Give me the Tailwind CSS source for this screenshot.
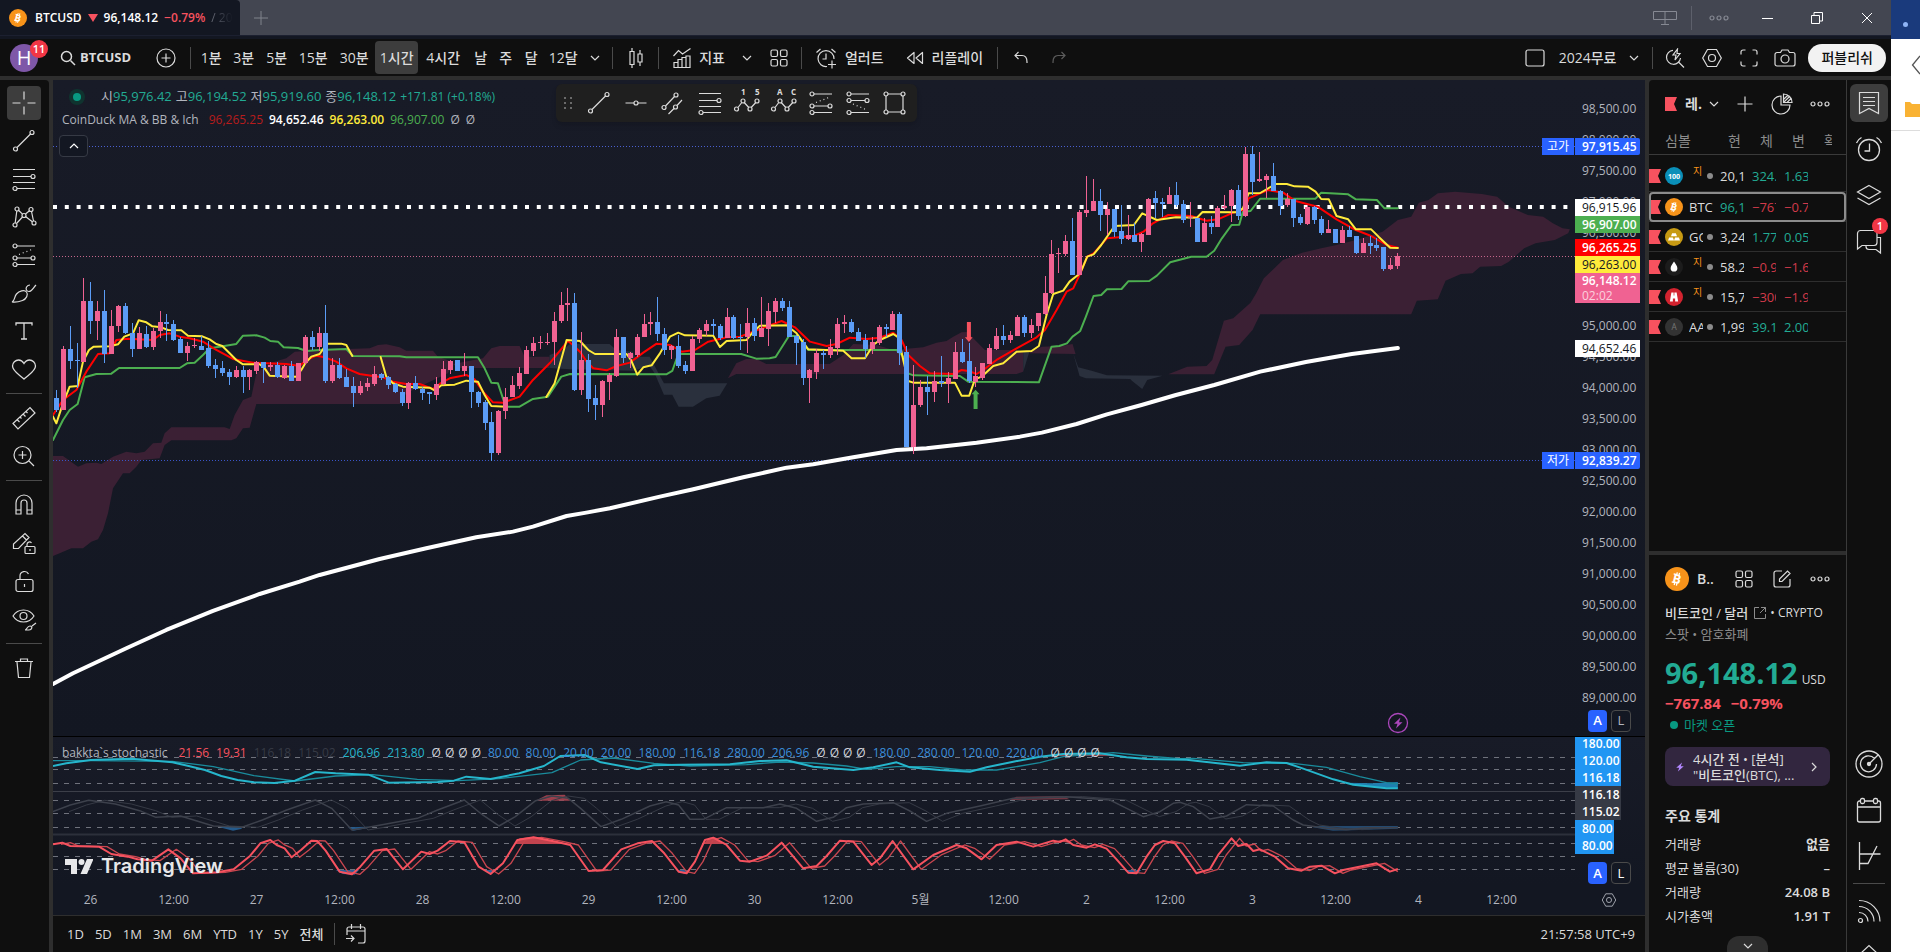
<!DOCTYPE html>
<html lang="ko">
<head>
  <meta charset="UTF-8">
  <meta name="viewport" content="width=device-width, initial-scale=1.0">
  <title>BTCUSD 96,148.12 −0.79%</title>
  <script src="https://cdn.jsdelivr.net/npm/@tailwindcss/browser@4"></script>
</head>
<body class="flex h-screen overflow-hidden bg-[#2e2e2e] font-['Open_Sans','Noto_Sans_CJK_KR',sans-serif] text-[13px] leading-4 text-[#dbdbdb]">

<!-- Shared icons -->
<svg class="hidden">
  <symbol id="i-chevron" viewBox="0 0 12 12"><path d="M2 4l4 4 4-4" fill="none" stroke="currentColor" stroke-width="1.2"/></symbol>
  <symbol id="i-dots" viewBox="0 0 20 8"><g fill="none" stroke="currentColor" stroke-width="1.2"><circle cx="3" cy="4" r="2"/><circle cx="10" cy="4" r="2"/><circle cx="17" cy="4" r="2"/></g></symbol>
  <symbol id="i-grid" viewBox="0 0 18 18"><g fill="none" stroke="currentColor" stroke-width="1.2"><rect x="1" y="1" width="6.5" height="6.5" rx="1.5"/><rect x="10.500" y="1" width="6.500" height="6.500" rx="1.500"/><rect x="1" y="10.500" width="6.500" height="6.500" rx="1.500"/><rect x="10.500" y="10.500" width="6.500" height="6.500" rx="1.500"/></g></symbol>
  <symbol id="i-hex" viewBox="0 0 22 22"><g fill="none" stroke="currentColor" stroke-width="1.2"><path d="M6.500 2.500h9l4.800 8.500-4.800 8.500h-9L1.700 11z"/><circle cx="11" cy="11" r="3.500"/></g></symbol>
  <symbol id="i-trend" viewBox="0 0 28 28"><g fill="none" stroke="currentColor" stroke-width="1.200"><circle cx="5.500" cy="22" r="2"/><circle cx="22" cy="5.500" r="2"/><path d="M7 20.500L20.500 7"/></g></symbol>
  <symbol id="i-fib" viewBox="0 0 28 28"><g fill="none" stroke="currentColor" stroke-width="1.200"><path d="M3 4.500h22M3 11.500h18M3 17.500h22M7 23.500h18"/><circle cx="23" cy="11.500" r="2"/><circle cx="5" cy="23.500" r="2"/></g></symbol>
  <symbol id="i-long" viewBox="0 0 28 28"><g fill="none" stroke="currentColor" stroke-width="1.200"><circle cx="5" cy="5" r="2"/><circle cx="5" cy="17" r="2"/><circle cx="23" cy="17" r="2"/><circle cx="5" cy="23.500" r="2"/><path d="M7 5h18M7 17h14M7 23.500h18"/><path d="M9 13.500L23 8" stroke-dasharray="1 3"/></g></symbol>
  <symbol id="i-btc" viewBox="0 0 24 24"><circle cx="12" cy="12" r="12" fill="#f7931a"/><g transform="rotate(14 12 12)"><text x="12" y="16.500" text-anchor="middle" font-size="12.500" font-weight="700" fill="#fff">B</text><path d="M10.700 5.500v3M13 5.500v3M10.700 15.500v3M13 15.500v3M7.500 7.800h3M7.500 16h3" stroke="#fff" stroke-width="1.300"/></g></symbol>
  <symbol id="i-bolt" viewBox="0 0 12 12"><path d="M8.500 0.500L1.500 6.800h3.600L3.500 11.500l7-6.300H6.900z" fill="currentColor"/></symbol>
  <symbol id="i-flag" viewBox="0 0 12 14"><path d="M0 0h12L9 7l3 7H0z" fill="#f7525f"/></symbol>
</svg>

<div class="flex min-w-0 flex-1 flex-col">

  <!-- Window title bar -->
  <div class="flex h-9 shrink-0 items-center border-b border-[#1c2030] bg-[#434651]">
    <div class="flex h-full w-60 items-center gap-1.5 overflow-hidden rounded-tr bg-[#131722] pl-[9px] whitespace-nowrap text-white">
      <svg class="mr-0.5 size-[18px] shrink-0"><use href="#i-btc"/></svg>
      <span class="text-xs font-semibold">BTCUSD</span>
      <svg class="size-2.5 shrink-0" viewBox="0 0 10 10"><path d="M0 1h10L5 9z" fill="#f7525f"/></svg>
      <span class="text-xs font-semibold">96,148.12</span>
      <span class="text-xs font-semibold text-[#f7525f]">−0.79%</span>
      <span class="bg-linear-to-r from-[#6a6e79] to-[#131722] bg-clip-text text-xs text-transparent">/ 20</span>
    </div>
    <button aria-label="새 탭" class="ml-3.5 text-[#80838c]"><svg class="size-3.5" viewBox="0 0 14 14"><path d="M7 0v14M0 7h14" stroke="currentColor"/></svg></button>
    <div class="ml-auto flex items-center">
      <svg class="h-4 w-6 text-[#868993]" viewBox="0 0 24 16" fill="none" stroke="currentColor"><path d="M.5 1.500h23v8H.5zM12 1.500v13M8 14.500h8"/></svg>
      <span class="mx-3.5 h-6 w-px bg-[#5d606b]"></span>
      <button aria-label="더보기" class="mr-[33px] ml-[3px] text-[#868993]"><svg class="h-2 w-5"><use href="#i-dots"/></svg></button>
      <button aria-label="최소화" class="w-[49px] text-white"><svg class="size-3" viewBox="0 0 12 12"><path d="M0 6.500h11" stroke="currentColor"/></svg></button>
      <button aria-label="창 복원" class="w-[50px] text-white"><svg class="size-3" viewBox="0 0 12 12" fill="none" stroke="currentColor"><path d="M.5 3.500h8v8h-8zM3 3V.5h8.500V9H9"/></svg></button>
      <button aria-label="닫기" class="mr-2 w-[22px] text-white"><svg class="size-3" viewBox="0 0 12 12"><path d="M1 1l10 10M11 1L1 11" stroke="currentColor"/></svg></button>
    </div>
  </div>
  <div class="h-[3px] shrink-0 bg-[#131722]"></div>

  <!-- Top toolbar -->
  <div class="flex h-[37px] shrink-0 items-center bg-[#0f0f0f] text-sm font-medium">
    <button class="relative ml-2.5 flex size-7 items-center justify-center rounded-full bg-[#7e57a8] text-xl text-white">H
      <span class="absolute -top-1 left-5 flex size-[18px] items-center justify-center rounded-full bg-[#f23645] text-[11px] font-semibold">11</span>
    </button>
    <button class="ml-[22px] flex items-center gap-1 text-[13px] font-bold">
      <svg class="size-4" viewBox="0 0 16 16" fill="none" stroke="currentColor" stroke-width="1.500"><circle cx="6.500" cy="6.500" r="5"/><path d="M10.500 10.500L15 15"/></svg>BTCUSD
    </button>
    <button aria-label="심볼 비교" class="ml-[25px]"><svg class="size-5" viewBox="0 0 20 20" fill="none" stroke="currentColor" stroke-width="1.200"><circle cx="10" cy="10" r="9"/><path d="M10 5.500v9M5.500 10h9"/></svg></button>
    <span class="ml-3.5 mr-1 h-[22px] w-px bg-[#4a4a4a]"></span>
    <button class="w-8">1분</button>
    <button class="w-[33px]">3분</button>
    <button class="w-[33px]">5분</button>
    <button class="w-10">15분</button>
    <button class="w-[42px]">30분</button>
    <button class="h-[33px] w-[43px] rounded bg-[#3d3d3d]">1시간</button>
    <button class="w-[50px]">4시간</button>
    <button class="w-[25px]">날</button>
    <button class="w-[25px]">주</button>
    <button class="w-[26px]">달</button>
    <button class="w-[38px]">12달</button>
    <button aria-label="시간 인터벌" class="flex w-[26px] justify-center"><svg class="size-3"><use href="#i-chevron"/></svg></button>
    <span class="mx-1 h-[22px] w-px bg-[#4a4a4a]"></span>
    <button aria-label="봉차트" class="flex w-[37px] justify-center"><svg class="h-5 w-3.5" viewBox="0 0 14 20" fill="none" stroke="currentColor" stroke-width="1.200"><path d="M1 3.500h4v13H1zM3 0v3.500M3 16.500V20M9 6h4v8H9zM11 2v4M11 14v4"/></svg></button>
    <span class="mx-1 h-[22px] w-px bg-[#4a4a4a]"></span>
    <button class="ml-2.5 flex items-center gap-2">
      <svg class="h-5 w-[18px]" viewBox="0 0 18 20" fill="none" stroke="currentColor" stroke-width="1.200"><path d="M.5 8l5-5.500 4 3.500L17.500.5M1 19.500v-5h4v-3h4v-2h4V8h4v11.500zM5 14v5.500M9 11v8.500M13 9.500v10"/></svg>지표
    </button>
    <button aria-label="지표 즐겨찾기" class="ml-4"><svg class="size-3"><use href="#i-chevron"/></svg></button>
    <button aria-label="레이아웃" class="ml-[17px]"><svg class="size-[18px]"><use href="#i-grid"/></svg></button>
    <span class="mx-[13px] h-[22px] w-px bg-[#4a4a4a]"></span>
    <button class="flex items-center gap-2">
      <svg class="size-[22px]" viewBox="0 0 22 22" fill="none" stroke="currentColor" stroke-width="1.200"><path d="M12 19.500A8 8 0 1 1 19 12M11 6.500V12H7.500M1.500 5.500L5.500 2M16.500 2l4 3.500M17 13.500v8M13 17.500h8"/></svg>얼러트
    </button>
    <button class="ml-[22px] flex items-center gap-2">
      <svg class="h-4 w-[18px]" viewBox="0 0 18 16" fill="none" stroke="currentColor" stroke-width="1.200" stroke-linejoin="round"><path d="M8 2.500v11L1.500 8zM16.500 2.500v11L10 8z"/></svg>리플레이
    </button>
    <span class="mr-4 ml-3.5 h-[22px] w-px bg-[#4a4a4a]"></span>
    <button aria-label="실행 취소"><svg class="size-3.5" viewBox="0 0 14 14" fill="none" stroke="currentColor" stroke-width="1.200"><path d="M4.500 1L1 4.500 4.500 8M1 4.500h7c3 0 5 2.500 5 6.500v1"/></svg></button>
    <button aria-label="다시 실행" class="ml-6 text-[#5c5c5c]"><svg class="size-3.5" viewBox="0 0 14 14" fill="none" stroke="currentColor" stroke-width="1.200"><path d="M9.500 1L13 4.500 9.500 8M13 4.500H6c-3 0-5 2.500-5 6.500v1"/></svg></button>

    <div class="ml-auto flex items-center">
      <button aria-label="레이아웃 셋업"><svg class="size-5" viewBox="0 0 20 20" fill="none" stroke="currentColor" stroke-width="1.200"><rect x="1" y="2" width="18" height="16" rx="2"/></svg></button>
      <button class="ml-3.5 flex items-center gap-3">2024무료<svg class="size-3"><use href="#i-chevron"/></svg></button>
      <span class="mx-3 h-[22px] w-px bg-[#4a4a4a]"></span>
      <button aria-label="빠른 찾기"><svg class="size-5" viewBox="0 0 20 20" fill="none" stroke="currentColor" stroke-width="1.200"><path d="M8 2.300A7 7 0 1 0 15.500 10M13.500 14L19 19.500M12.500 1L8 7h3l-1 5 5-6.500h-3z"/></svg></button>
      <button aria-label="설정" class="ml-4"><svg class="size-[22px]"><use href="#i-hex"/></svg></button>
      <button aria-label="전체화면" class="ml-[17px]"><svg class="size-[18px]" viewBox="0 0 18 18" fill="none" stroke="currentColor" stroke-width="1.200"><path d="M1 5.500V3a2 2 0 0 1 2-2h2.500M12.500 1H15a2 2 0 0 1 2 2v2.500M17 12.500V15a2 2 0 0 1-2 2h-2.500M5.500 17H3a2 2 0 0 1-2-2v-2.500"/></svg></button>
      <button aria-label="스냅샷" class="ml-4"><svg class="h-[18px] w-[22px]" viewBox="0 0 22 18" fill="none" stroke="currentColor" stroke-width="1.200"><path d="M3 3.500h3.500L8 1h6l1.500 2.500H19a2 2 0 0 1 2 2V15a2 2 0 0 1-2 2H3a2 2 0 0 1-2-2V5.500a2 2 0 0 1 2-2z"/><circle cx="11" cy="10" r="4"/></svg></button>
      <button class="mr-[5px] ml-3 h-7 rounded-full bg-[#f2f2f2] px-[13px] text-[#0f0f0f]">퍼블리쉬</button>
    </div>
  </div>

  <div class="flex min-h-0 flex-1 gap-1 pt-1">

    <!-- Drawing tools -->
    <div class="flex w-[49px] shrink-0 flex-col items-center rounded-tr bg-[#0f0f0f] pt-1 pr-0.5 [&>button]:flex [&>button]:h-[38px] [&>button]:w-[34px] [&>button]:shrink-0 [&>button]:items-center [&>button]:justify-center">
      <button aria-label="십자선"><span class="flex h-[34px] w-[34px] items-center justify-center rounded bg-[#3d3d3d]"><svg class="size-7" viewBox="0 0 28 28" stroke="currentColor" stroke-width="1.200"><path d="M14 2.500v8M14 17.500v8M2.500 14h8M17.500 14h8"/></svg></span></button>
      <button aria-label="추세줄"><svg class="size-7"><use href="#i-trend"/></svg></button>
      <button aria-label="피보나치"><svg class="size-7"><use href="#i-fib"/></svg></button>
      <button aria-label="패턴"><svg class="size-7" viewBox="0 0 28 28" fill="none" stroke="currentColor" stroke-width="1.200"><circle cx="7" cy="6" r="2"/><circle cx="21" cy="6.500" r="2"/><circle cx="14" cy="12.500" r="2"/><circle cx="5" cy="22" r="2"/><circle cx="24" cy="20" r="2"/><path d="M6.800 8L5.200 20M8.500 7.300l4 3.800M15.500 11l4-3.200M21.500 8.500l2 9.500M6.500 20.500l6-6.500M15.500 13.500l6.800 5.300"/></svg></button>
      <button aria-label="예측"><svg class="size-7"><use href="#i-long"/></svg></button>
      <button aria-label="브러쉬"><svg class="size-7" viewBox="0 0 28 28" fill="none" stroke="currentColor" stroke-width="1.200"><path d="M2 23c3-1 2-5 4.500-8 2.500-3 8-4.500 10-2s0 7-4 8.500S5 23.500 2 23zM16.500 8c-1 2 0 4.500 2.500 4.500 3 0 4-3.500 7-6.500M16.500 8c1-1.500 2-2 3.500-2"/></svg></button>
      <button aria-label="텍스트"><svg class="size-7" viewBox="0 0 28 28" fill="none" stroke="currentColor" stroke-width="1.300"><path d="M6 8.500V6h16v2.500M14 6v16M11 22h6"/></svg></button>
      <button aria-label="아이콘"><svg class="size-7" viewBox="0 0 28 28" fill="none" stroke="currentColor" stroke-width="1.300"><path d="M14 8.500C12.500 6 10.500 5 8.500 5 5.500 5 2.500 7.500 2.500 11c0 5 6 8 11.500 13 5.500-5 11.500-8 11.500-13 0-3.500-3-6-6-6-2 0-4 1-5.500 3.500z"/></svg></button>
      <span class="my-[5px] h-px w-9 shrink-0 bg-[#4a4a4a]"></span>
      <button aria-label="측정"><svg class="size-7" viewBox="0 0 28 28" fill="none" stroke="currentColor" stroke-width="1.200"><path d="M3 19.500L20 3.500l5 5.500L8 25zM7 15.500l2.500 2.500M10 13l1.500 1.500M13 10l2.500 2.500M16 7.500L17.500 9"/></svg></button>
      <button aria-label="확대"><svg class="size-7" viewBox="0 0 28 28" fill="none" stroke="currentColor" stroke-width="1.200"><circle cx="12.500" cy="13" r="8.500"/><path d="M12.500 9v8M8.500 13h8M19 19l5 5"/></svg></button>
      <span class="my-[5px] h-px w-9 shrink-0 bg-[#4a4a4a]"></span>
      <button aria-label="자석"><svg class="size-7" viewBox="0 0 28 28" fill="none" stroke="currentColor" stroke-width="1.200"><path d="M6 23V12a8 8 0 0 1 16 0v11h-5V12a3 3 0 0 0-6 0v11zM6 19h5M17 19h5"/></svg></button>
      <button aria-label="그리기 모드"><svg class="size-7" viewBox="0 0 28 28" fill="none" stroke="currentColor" stroke-width="1.200"><path d="M3.500 19.500V15L15 4.500l4 4L8.500 19.500zM12.500 7l4 4M17 17v-1.500a2.500 2.500 0 0 1 4.500-1.500"/><rect x="15" y="17.500" width="10" height="7" rx="1"/><path d="M20 20v2"/></svg></button>
      <button aria-label="잠금"><svg class="size-7" viewBox="0 0 28 28" fill="none" stroke="currentColor" stroke-width="1.200"><rect x="6" y="12.500" width="17" height="12" rx="2"/><path d="M10 12.500V9a4.500 4.500 0 0 1 8.500-2M14.500 17v3"/></svg></button>
      <button aria-label="숨기기"><svg class="size-7" viewBox="0 0 28 28" fill="none" stroke="currentColor" stroke-width="1.200"><path d="M3 11c5-8 16-8 21 0-5 8-16 8-21 0z"/><circle cx="13.500" cy="11" r="3.500"/><path d="M15 25c2 0 2-4 5-4s2 4-1 4zM22 21l4-3"/></svg></button>
      <span class="my-[5px] h-px w-9 shrink-0 bg-[#4a4a4a]"></span>
      <button aria-label="삭제"><svg class="size-7" viewBox="0 0 28 28" fill="none" stroke="currentColor" stroke-width="1.200"><path d="M5 7.500h18M10.500 7V5h7v2M7 8l1.500 15.500h11L21 8"/></svg></button>
    </div>

    <!-- Chart -->
    <div class="flex min-w-0 flex-1 flex-col rounded-t bg-[#131722]">
      <div class="relative flex min-h-0 flex-1 bg-linear-to-b from-[#181b27] to-[#131722]">
        <svg id="priceChart" class="h-full min-w-0 flex-1 overflow-hidden">
          <g transform="translate(0 160) scale(.3333)">
            <g id="clouds"></g>
          </g>
          <line x1="0" x2="100%" y1="66.500" y2="66.500" stroke="#4a5fd0" stroke-dasharray="1 2"/>
          <line x1="0" x2="100%" y1="380.500" y2="380.500" stroke="#3a55c8" stroke-dasharray="1 2"/>
          <line x1="0" x2="100%" y1="127" y2="127" stroke="#fff" stroke-width="4" stroke-dasharray="4 7.800"/>
          <line x1="0" x2="100%" y1="176.500" y2="176.500" stroke="#c4668b" stroke-dasharray="1 2"/>
          <g transform="translate(0 160) scale(.3333)" fill="none">
            <g id="averages"></g>
            <g id="candles" shape-rendering="crispEdges"></g>
            <path d="M2742 246h12v46h5l-11 14-12-14h6z" fill="#f7525f"/>
            <path d="M2762 507h12v-44h6l-12-14-12 14h6z" fill="#4caf50"/>
          </g>
          <g transform="translate(1335 633)">
            <circle cx="10" cy="10" r="9.500" fill="#131722" stroke="#ab47bc" stroke-width="1.300"/>
            <path d="M12.500 4.500L6 10.800h3.500L8 15.500l6.500-6.300H11z" fill="#ab47bc"/>
          </g>
        </svg>

        <!-- Price scale -->
        <div class="relative w-[70px] shrink-0 overflow-hidden text-xs text-[#b2b5be]">
          <ul id="priceScale" class="pt-[13px] pl-[7px] [&>li]:flex [&>li]:h-[31px] [&>li]:items-center"></ul>
          <div class="absolute bottom-1 left-[13px] flex gap-1 text-[13px]">
            <button class="h-[22px] w-[19px] rounded bg-[#2962ff] font-semibold text-white">A</button>
            <button class="h-[22px] w-5 rounded border border-[#4a4a4a]">L</button>
          </div>
        </div>
        <div class="absolute top-[58px] right-[5px] flex gap-px text-xs leading-[17px] text-white">
          <span class="w-8 bg-[#2962ff] text-center">고가</span><span class="w-[65px] rounded-r-xs bg-[#2962ff] pl-[7px] font-semibold">97,915.45</span>
        </div>
        <div class="absolute top-[372px] right-[5px] flex gap-px text-xs leading-[17px] text-white">
          <span class="w-8 bg-[#2962ff] text-center">저가</span><span class="w-[65px] rounded-r-xs bg-[#2962ff] pl-[7px] font-semibold">92,839.27</span>
        </div>
        <div class="absolute top-[119px] right-[5px] flex w-[65px] flex-col text-xs leading-[17px] font-semibold text-white">
          <span class="bg-white pl-[7px] font-medium text-[#131722]">96,915.96</span>
          <span class="bg-[#4caf50] pl-[7px]">96,907.00</span>
        </div>
        <div class="absolute top-[159px] right-[5px] flex w-[65px] flex-col text-xs leading-[17px] font-semibold text-white">
          <span class="bg-[#ff0000] pl-[7px]">96,265.25</span>
          <span class="bg-[#ffeb3b] pl-[7px] font-medium text-[#131722]">96,263.00</span>
          <span class="bg-[#f06292] pl-[7px] leading-[15px]">96,148.12<br><span class="font-medium text-[#fbd0de]">02:02</span></span>
        </div>
        <span class="absolute top-[260px] right-[5px] w-[65px] bg-white pl-[7px] text-xs leading-[17px] font-medium text-[#131722]">94,652.46</span>

        <!-- Legend -->
        <div class="absolute top-2 left-2 flex flex-col gap-[7px] text-xs whitespace-nowrap text-[#b2b5be]">
          <div class="flex items-center gap-1 text-[13px] text-[#22ab94]">
            <span class="mx-2 flex size-4 items-center justify-center rounded-full bg-[#10332f]"><span class="size-2 rounded-full bg-[#089981]"></span></span>
            <span class="ml-1"><span class="text-[#b2b5be]">시</span>95,976.42</span>
            <span><span class="text-[#b2b5be]">고</span>96,194.52</span>
            <span><span class="text-[#b2b5be]">저</span>95,919.60</span>
            <span><span class="text-[#b2b5be]">종</span>96,148.12</span>
            <span class="text-xs">+171.81 (+0.18%)</span>
          </div>
          <div class="flex items-center gap-1.5 pl-px">
            <span>CoinDuck MA &amp; BB &amp; Ich</span>
            <span class="ml-1 text-[#b71c1c]">96,265.25</span>
            <span class="font-semibold text-white">94,652.46</span>
            <span class="font-semibold text-[#ffeb3b]">96,263.00</span>
            <span class="text-[#4caf50]">96,907.00</span>
            <span>Ø</span><span>Ø</span>
          </div>
          <button aria-label="지표 범례 숨기기" class="-ml-0.5 flex h-[22px] w-[29px] items-center justify-center rounded-sm border border-[#363a45] bg-[#131722] text-white"><svg class="size-3 rotate-180"><use href="#i-chevron"/></svg></button>
        </div>

        <!-- Favourite drawings -->
        <div class="absolute top-1 left-[503px] flex h-[38px] items-center rounded-md bg-[#1f1f1f] pr-1 shadow-md [&>button]:flex [&>button]:w-[37px] [&>button]:justify-center">
          <svg class="mx-2 h-3.5 w-2" viewBox="0 0 8 14" fill="#6a6a6a"><path d="M0 1h2v2H0zM6 1h2v2H6zM0 6h2v2H0zM6 6h2v2H6zM0 11h2v2H0zM6 11h2v2H6z"/></svg>
          <button aria-label="추세줄"><svg class="size-7"><use href="#i-trend"/></svg></button>
          <button aria-label="가로줄"><svg class="size-7" viewBox="0 0 28 28" fill="none" stroke="currentColor" stroke-width="1.200"><path d="M3.500 14H12M16 14h8.500"/><circle cx="14" cy="14" r="2"/></svg></button>
          <button aria-label="패럴렐 채널"><svg class="size-7" viewBox="0 0 28 28" fill="none" stroke="currentColor" stroke-width="1.200"><circle cx="5" cy="18.500" r="2"/><circle cx="17" cy="6" r="2"/><circle cx="16.500" cy="18" r="2"/><path d="M6.500 17l9-9.500M9.500 25l5.500-5.500M18 16.500l5-5.500"/></svg></button>
          <button aria-label="피보나치 되돌림"><svg class="size-7"><use href="#i-fib"/></svg></button>
          <button aria-label="엘리엇 임펄스 파동"><svg class="size-7 overflow-visible" viewBox="0 0 28 28" fill="none" stroke="currentColor" stroke-width="1.200"><circle cx="3.500" cy="20" r="2"/><circle cx="10" cy="12" r="2"/><circle cx="17" cy="20" r="2"/><circle cx="24" cy="12" r="2"/><path d="M5 18.500L8.800 13.500M11.200 13.500L15.800 18.500M18.200 18.500L22.800 13.500"/><text x="8" y="6" font-size="8" font-weight="700" fill="currentColor" stroke="none">1</text><text x="22" y="6" font-size="8" font-weight="700" fill="currentColor" stroke="none">5</text></svg></button>
          <button aria-label="엘리엇 코렉션 파동"><svg class="size-7 overflow-visible" viewBox="0 0 28 28" fill="none" stroke="currentColor" stroke-width="1.200"><circle cx="3.500" cy="20" r="2"/><circle cx="10" cy="12" r="2"/><circle cx="17" cy="20" r="2"/><circle cx="24" cy="12" r="2"/><path d="M5 18.500L8.800 13.500M11.200 13.500L15.800 18.500M18.200 18.500L22.800 13.500"/><text x="7" y="6" font-size="8" font-weight="700" fill="currentColor" stroke="none">A</text><text x="21" y="6" font-size="8" font-weight="700" fill="currentColor" stroke="none">C</text></svg></button>
          <button aria-label="롱 포지션"><svg class="size-7"><use href="#i-long"/></svg></button>
          <button aria-label="숏 포지션"><svg class="size-7" viewBox="0 0 28 28" fill="none" stroke="currentColor" stroke-width="1.200"><circle cx="5" cy="5" r="2"/><circle cx="5" cy="11.500" r="2"/><circle cx="23" cy="11.500" r="2"/><circle cx="5" cy="23.500" r="2"/><path d="M7 5h18M7 11.500h14M7 23.500h18"/><path d="M9 15l14 6" stroke-dasharray="1 3"/></svg></button>
          <button aria-label="사각형"><svg class="size-7" viewBox="0 0 28 28" fill="none" stroke="currentColor" stroke-width="1.200"><circle cx="5" cy="5" r="2"/><circle cx="22" cy="5" r="2"/><circle cx="5" cy="23" r="2"/><circle cx="22" cy="23" r="2"/><path d="M7 5h13M7 23h13M5 7v14M22 7v14"/></svg></button>
        </div>
      </div>

      <!-- Stochastic pane -->
      <div class="relative flex h-[148px] shrink-0 border-t border-black bg-linear-to-b from-[#181b27] to-[#131722]">
        <svg class="h-full min-w-0 flex-1">
          <g stroke="#6f727c" stroke-dasharray="5 6">
            <line x1="0" x2="100%" y1="20.500" y2="20.500"/><line x1="0" x2="100%" y1="32.500" y2="32.500"/><line x1="0" x2="100%" y1="46.500" y2="46.500"/>
            <line x1="0" x2="100%" y1="63.500" y2="63.500"/><line x1="0" x2="100%" y1="76.500" y2="76.500"/><line x1="0" x2="100%" y1="90.500" y2="90.500"/>
            <line x1="0" x2="100%" y1="106.500" y2="106.500"/><line x1="0" x2="100%" y1="119.500" y2="119.500"/><line x1="0" x2="100%" y1="132.500" y2="132.500"/>
          </g>
          <g stroke="#3c3f49"><line x1="0" x2="100%" y1="54.500" y2="54.500"/><line x1="0" x2="100%" y1="97.500" y2="97.500" stroke-width="2" stroke="#2c303b"/></g>
          <g id="stoch" transform="translate(0 -7) scale(.3333)" fill="none" stroke-linejoin="round"></g>
        </svg>
        <div class="relative w-[70px] shrink-0 overflow-hidden text-xs leading-[17px] font-semibold text-white">
          <div class="-mt-0.5 flex flex-col items-start *:pr-px *:pl-[7px]">
            <span class="bg-[#2196f3]">180.00</span><span class="bg-[#2196f3]">120.00</span><span class="bg-[#2196f3]">116.18</span>
            <span class="bg-[#363a45]">116.18</span><span class="bg-[#363a45]">115.02</span>
            <span class="bg-[#2196f3]">80.00</span><span class="bg-[#2196f3]">80.00</span>
          </div>
          <div class="absolute bottom-0 left-[13px] flex gap-1 text-[13px]">
            <button class="h-[22px] w-[19px] rounded bg-[#2962ff] font-semibold text-white">A</button>
            <button class="h-[22px] w-5 rounded border border-[#4a4a4a] font-normal">L</button>
          </div>
        </div>
        <div class="absolute top-2 left-[9px] flex gap-[7px] text-xs whitespace-nowrap text-[#3b8fdc]">
          <span class="mr-1 text-[#b2b5be]">bakkta`s stochastic</span>
          <span class="text-[#f7525f]">21.56</span><span class="text-[#f7525f]">19.31</span>
          <span class="text-[#363a45]">116.18</span><span class="text-[#363a45]">115.02</span>
          <span class="text-[#26b6cc]">206.96</span><span class="text-[#26b6cc]">213.80</span>
          <span class="flex gap-1 text-[#d1d4dc]"><i class="not-italic">Ø</i><i class="not-italic">Ø</i><i class="not-italic">Ø</i><i class="not-italic">Ø</i></span>
          <span>80.00</span><span>80.00</span><span>20.00</span><span>20.00</span><span>180.00</span><span>116.18</span><span>280.00</span><span>206.96</span>
          <span class="flex gap-1 text-[#d1d4dc]"><i class="not-italic">Ø</i><i class="not-italic">Ø</i><i class="not-italic">Ø</i><i class="not-italic">Ø</i></span>
          <span>180.00</span><span>280.00</span><span>120.00</span><span>220.00</span>
          <span class="flex gap-1 text-[#d1d4dc]"><i class="not-italic">Ø</i><i class="not-italic">Ø</i><i class="not-italic">Ø</i><i class="not-italic">Ø</i></span>
        </div>
        <div class="absolute bottom-2 left-3 flex items-center gap-2 text-xl leading-5 font-semibold text-[#e8e8ea]">
          <svg class="h-[15px] w-7" viewBox="0 0 28 15" fill="currentColor"><path d="M0 0h12v15H6V6H0zM22 0h6.500L22 15h-6.500z"/><circle cx="16.500" cy="3" r="3"/></svg>
          <span class="font-['Inter']">TradingView</span>
        </div>
      </div>

      <!-- Time scale -->
      <div class="flex h-[31px] shrink-0 items-center text-xs text-[#b2b5be]">
        <ul class="-ml-1 flex min-w-0 flex-1 overflow-hidden text-center [&>li]:w-[83px] [&>li]:shrink-0">
          <li>26</li><li>12:00</li><li>27</li><li>12:00</li><li>28</li><li>12:00</li><li>29</li><li>12:00</li><li>30</li><li>12:00</li><li>5월</li><li>12:00</li><li>2</li><li>12:00</li><li>3</li><li>12:00</li><li>4</li><li>12:00</li>
        </ul>
        <button aria-label="축 설정" class="mr-7"><svg class="size-4"><use href="#i-hex"/></svg></button>
      </div>

      <!-- Date ranges -->
      <div class="flex h-[37px] shrink-0 items-center gap-[11px] border-t border-[#2e2e2e] bg-[#0f0f0f] pr-2.5 pl-3.5 font-medium">
        <button>1D</button><button>5D</button><button>1M</button><button>3M</button><button>6M</button><button>YTD</button><button>1Y</button><button>5Y</button><button>전체</button>
        <span class="h-[22px] w-px bg-[#4a4a4a]"></span>
        <button aria-label="날짜로 가기"><svg class="size-5" viewBox="0 0 20 20" fill="none" stroke="currentColor" stroke-width="1.200"><path d="M1 11V5a2 2 0 0 1 2-2h14a2 2 0 0 1 2 2v12a2 2 0 0 1-2 2h-5M1 7h18M5.500 0v5M14.500 0v5M0 14.500h7.500M5 11.500l3 3-3 3"/></svg></button>
        <button class="ml-auto">21:57:58 UTC+9</button>
      </div>
    </div>

    <!-- Watchlist and details -->
    <div class="flex w-[242px] shrink-0">
      <div class="flex w-[197px] flex-col gap-1">
        <div class="h-[471px] overflow-hidden rounded-tl bg-[#0f0f0f]">
          <div class="flex h-12 items-center pl-4">
            <svg class="h-3.5 w-3"><use href="#i-flag"/></svg>
            <button class="ml-2 flex items-center gap-1.5 text-sm font-bold">레.<svg class="size-3"><use href="#i-chevron"/></svg></button>
            <button aria-label="심볼 추가" class="ml-[17px]"><svg class="size-4" viewBox="0 0 16 16"><path d="M8 .5v15M.5 8h15" stroke="currentColor" stroke-width="1.200"/></svg></button>
            <button aria-label="고급 보기" class="ml-[18px]"><svg class="size-[22px]" viewBox="0 0 22 22" fill="none" stroke="currentColor" stroke-width="1.200"><path d="M10 3a9 9 0 1 0 9 9h-9zM12.500 1A8.500 8.500 0 0 1 21 9.500h-8.500zM13 6l4-4M13 9l6-6M16 9.500L20.500 5"/></svg></button>
            <button aria-label="더보기" class="ml-[17px]"><svg class="h-2 w-5"><use href="#i-dots"/></svg></button>
          </div>
          <table class="w-full table-fixed border-collapse">
            <colgroup><col class="w-[67px]"><col class="w-9"><col class="w-8"><col class="w-8"><col></colgroup>
            <thead>
              <tr class="h-[26px] border-b border-[#3a3a3a] text-left text-sm text-[#8c8c8c] *:font-normal">
                <th class="pl-4">심볼</th><th class="pl-3">현</th><th class="pl-2">체</th><th class="pl-2">변</th><th class="pl-2"><span class="block w-2 overflow-hidden">확</span></th>
              </tr>
            </thead>
            <tbody id="watchlist" class="before:block before:h-[7px]"></tbody>
          </table>
        </div>

        <div class="relative min-h-0 flex-1 overflow-hidden bg-[#0f0f0f] px-4 pt-3">
          <div class="flex items-center text-sm font-semibold">
            <svg class="size-6"><use href="#i-btc"/></svg>
            <span class="ml-2 w-8">B..</span>
            <button aria-label="레이아웃" class="ml-1.5"><svg class="size-[18px]"><use href="#i-grid"/></svg></button>
            <button aria-label="노트" class="ml-5"><svg class="size-[18px]" viewBox="0 0 18 18" fill="none" stroke="currentColor" stroke-width="1.200"><path d="M9 1H3a2 2 0 0 0-2 2v12a2 2 0 0 0 2 2h12a2 2 0 0 0 2-2V9M6.500 11.500V9l8-8L17 3.500l-8 8z"/></svg></button>
            <button aria-label="더보기" class="ml-[19px]"><svg class="h-2 w-5"><use href="#i-dots"/></svg></button>
          </div>
          <div class="mt-3 flex items-center gap-1 text-[13px] leading-5 font-medium whitespace-nowrap">
            비트코인 / 달러
            <svg class="ml-0.5 size-3 text-[#8c8c8c]" viewBox="0 0 12 12" fill="none" stroke="currentColor"><path d="M5 .5H.5v11h11V7M7 .5h4.500V5M11.500.5L6 6"/></svg>
            <span class="text-xs">• CRYPTO</span>
          </div>
          <p class="text-[13px] leading-[22px] text-[#8c8c8c]">스팟 • 암호화폐</p>
          <p class="mt-3 flex items-baseline gap-1 text-[29px] leading-8 font-bold text-[#22ab94]">96,148.12<span class="text-xs font-medium text-[#dbdbdb]">USD</span></p>
          <p class="mt-1 flex gap-2.5 text-[15px] leading-5 font-bold text-[#f7525f]"><span>−767.84</span><span>−0.79%</span></p>
          <p class="mt-0.5 flex items-center gap-1.5 pl-[5px] leading-5 text-[#089981]"><span class="size-2 rounded-full bg-[#089981]"></span>마켓 오픈</p>
          <a href="#" class="mt-3 flex h-[39px] items-center gap-2 rounded-lg bg-[#32263f] pr-2.5 pl-2.5">
            <svg class="size-2.5 text-[#b388ff]"><use href="#i-bolt"/></svg>
            <span class="flex-1 text-[13px] font-medium">4시간 전 • [분석]<br>"비트코인(BTC), ...</span>
            <svg class="size-3 -rotate-90"><use href="#i-chevron"/></svg>
          </a>
          <h3 class="mt-[18px] text-sm leading-6 font-bold">주요 통계</h3>
          <dl class="mt-1 grid grid-cols-[1fr_auto] text-[13px] leading-6 [&>dd]:text-right [&>dd]:font-semibold">
            <dt>거래량</dt><dd>없음</dd>
            <dt>평균 볼륨(30)</dt><dd>–</dd>
            <dt>거래량</dt><dd>24.08 B</dd>
            <dt>시가총액</dt><dd>1.91 T</dd>
          </dl>
          <button aria-label="더 보기" class="absolute -bottom-1 left-[78px] flex h-5 w-[41px] items-center justify-center rounded-t-xl bg-[#2e2e2e]"><svg class="size-3"><use href="#i-chevron"/></svg></button>
        </div>
      </div>

      <!-- Side tabs -->
      <div class="flex flex-1 flex-col items-center border-l border-[#3a3a3a] bg-[#0f0f0f] [&>button]:flex [&>button]:h-[46px] [&>button]:w-[38px] [&>button]:shrink-0 [&>button]:items-center [&>button]:justify-center">
        <button aria-label="왓치리스트"><span class="flex size-[38px] items-center justify-center rounded-md bg-[#3d3d3d]"><svg class="size-7" viewBox="0 0 28 28" fill="none" stroke="currentColor" stroke-width="1.200"><path d="M4.500 3.500h19v21L14 19.500l-9.500 5zM8 8.500h12M8 12.500h12M8 16.500h12"/></svg></span></button>
        <button aria-label="얼러트"><svg class="size-7" viewBox="0 0 28 28" fill="none" stroke="currentColor" stroke-width="1.300"><circle cx="14" cy="15" r="10.500"/><path d="M14.500 8.500V16H9.500M1.500 8c1-2.500 3-4.500 5-5.500M26.500 8c-1-2.500-3-4.500-5-5.500"/></svg></button>
        <button aria-label="오브젝트 트리"><svg class="size-7" viewBox="0 0 28 28" fill="none" stroke="currentColor" stroke-width="1.200"><path d="M14 4.500L25.500 11 14 17.500 2.500 11zM2.500 17L14 23.500 25.500 17"/></svg></button>
        <button aria-label="채팅" class="relative"><svg class="size-7" viewBox="0 0 28 28" fill="none" stroke="currentColor" stroke-width="1.200"><path d="M5 3.500h14a3 3 0 0 1 3 3v9a3 3 0 0 1-3 3H7L2.500 22V6.500M2.500 6.500a3 3 0 0 1 3-3M22 10.500h3.500V26L21 22.500h-7a3 3 0 0 1-3-3v-1"/></svg>
          <span class="absolute top-0 right-0 flex size-4 items-center justify-center rounded-full bg-[#f23645] text-[11px] font-semibold text-white">1</span></button>
        <span class="flex-1"></span>
        <button aria-label="스크리너"><svg class="size-7" viewBox="0 0 28 28" fill="none" stroke="currentColor" stroke-width="1.300"><circle cx="14" cy="14" r="13"/><path d="M19.500 8.500a8 8 0 1 0 2 5.500M14 14l9.500-9.500"/><circle cx="14" cy="14" r="1.500" fill="currentColor"/></svg></button>
        <button aria-label="캘린더"><svg class="size-7" viewBox="0 0 28 28" fill="none" stroke="currentColor" stroke-width="1.300"><path d="M5.500 5H4.500a2 2 0 0 0-2 2v17a2 2 0 0 0 2 2h19a2 2 0 0 0 2-2V7a2 2 0 0 0-2-2h-1M9.500 5h9M2.500 11h23"/><rect x="5.500" y="2.500" width="4" height="5" rx="1.500"/><rect x="18.500" y="2.500" width="4" height="5" rx="1.500"/></svg></button>
        <button aria-label="옵션"><svg class="size-7" viewBox="0 0 28 28" fill="none" stroke="currentColor" stroke-width="1.300"><path d="M4.500 0v28M4.500 12h21M4.500 21.500h8.500L22 4"/></svg></button>
        <span class="my-1 h-px w-8 shrink-0 bg-[#4a4a4a]"></span>
        <button aria-label="아이디어"><svg class="size-7" viewBox="0 0 28 28" fill="none" stroke="currentColor" stroke-width="1.200"><circle cx="5.500" cy="23.500" r="2"/><path d="M4 15.500a9 9 0 0 1 9 9M4 9.500a15 15 0 0 1 15 15M4 3.500a21 21 0 0 1 21 21"/></svg></button>
        <svg class="h-[18px] w-7 shrink-0" viewBox="0 0 28 18" fill="none" stroke="currentColor" stroke-width="1.200"><path d="M5 20l9-8.500 9 8.500"/></svg>
      </div>
    </div>
  </div>
</div>

<!-- Window behind -->
<div class="flex w-[29px] shrink-0 flex-col bg-white">
  <div class="flex h-[39px] items-center justify-center bg-[#1a3a7c] pt-2.5"><span class="size-[5px] rounded-full bg-[#8fb4f5]"></span></div>
  <div class="flex h-[92px] flex-col items-end gap-[27px] overflow-hidden border-b border-[#dddddd] pt-4">
    <svg class="h-5 w-2.5" viewBox="0 0 10 20"><path d="M10 1L2.500 10 10 19" fill="none" stroke="#555" stroke-width="1.300"/></svg>
    <svg class="h-[15px] w-[15px]" viewBox="0 0 15 15"><path d="M0 0h5l2 2h8v13H0z" fill="#f9b233"/></svg>
  </div>
</div>

<script>
  // price scale, 500 per row
  const scale = document.getElementById("priceScale");
  for (let p = 98500; p >= 89000; p -= 500) {
    scale.insertAdjacentHTML("beforeend", `<li>${p.toLocaleString("en-US")}.00</li>`);
  }

  // d = down, u = up, then high, body top, body bottom, low
  const candles = `d450,473,510,516 u318,327,510,510 d257,327,363,386 d309,360,363,445 u114,183,366,366 d126,183,242,283 u183,212,242,300 d150,212,342,368 u210,257,342,342 u195,198,258,275
d189,198,280,282 d250,278,327,350 u262,280,327,327 d258,281,321,325 u265,272,321,330 u213,246,273,294 d221,245,252,303 d240,251,300,304 d292,298,339,339 u305,318,339,362
u295,315,318,324 d287,317,330,330 d303,325,378,384 d357,375,387,414 d363,384,399,407 d387,395,411,434 u378,390,411,413 d378,390,411,458 u386,390,411,450 u363,366,392,402
d366,367,383,428 u366,375,380,392 d365,375,410,413 u374,377,414,416 d364,377,422,422 u368,369,422,422 u286,290,369,375 d273,290,321,330 u260,278,321,333 d195,278,423,428
u354,375,423,428 d354,375,413,416 d386,411,440,440 d411,437,458,501 u423,437,458,464 u414,429,440,452 u378,401,432,437 d399,402,413,419 d408,410,434,446 d430,432,456,460
d447,456,489,497 u426,429,489,507 d408,429,447,451 d440,446,458,479 d455,457,461,491 u411,432,464,479 u363,387,432,434 u360,362,389,402 d360,361,392,392 u339,378,392,408
d378,379,455,503 d453,455,489,501 d480,487,548,570 d516,547,638,663 u510,512,638,644 u444,471,513,537 u408,435,471,471 u381,399,437,446 u317,330,402,402 u291,309,332,347
u287,306,310,326 u278,305,309,315 u216,242,306,375 u155,195,243,250 u144,189,195,242 d159,189,450,453 u275,360,450,465 d342,360,476,516 d434,473,494,540 u420,423,494,531
u400,404,426,480 u267,291,408,410 d290,292,354,368 u336,340,354,384 u282,291,344,350 u221,252,291,291 u215,246,252,285 d171,246,282,303 d263,281,330,345 u315,319,330,356
d285,318,378,384 d364,375,393,401 u287,296,393,393 u263,270,297,309 u239,251,273,287 d237,251,258,285 d251,257,293,300 u204,230,293,293 d225,230,293,296 d252,290,294,330
u204,248,291,339 d234,248,288,304 u171,263,290,292 u189,212,266,318 u174,183,216,249 d174,183,204,212 d183,200,290,290 d284,288,308,375 d296,306,414,434 u386,390,414,488
u326,339,397,417 d330,340,346,387 u296,321,346,353 u233,251,325,344 u224,245,252,280 d236,245,276,278 d263,275,303,303 d281,300,327,353 u291,306,327,342 u255,260,308,314
d251,260,267,290 u213,221,270,270 d215,221,338,375 d318,336,621,621 u375,494,621,641 u420,440,495,501 d408,440,456,525 u393,423,456,487 d348,423,428,440 u395,413,431,489
u306,336,416,416 d296,336,366,369 d309,363,422,428 u382,408,425,440 u369,369,413,419 u313,323,372,372 u263,287,327,330 d254,287,301,315 u272,284,300,308 u225,230,287,287
d225,230,278,290 u236,254,278,293 u218,219,257,272 u108,158,221,225 u0,41,160,162 u24,39,42,100 u-15,3,41,47 d-66,3,104,104 u-90,-84,104,106 u-192,-91,-82,-68
u-183,-117,-87,-87 d-154,-117,-76,-27 u-114,-92,-75,-16 d-94,-93,-25,-10 d-105,-27,-4,12 u-75,-15,-4,0 d-51,-15,5,6 u-21,-19,5,35 u-126,-124,-16,-15 d-148,-125,-112,-66
d-126,-115,-109,-68 u-160,-135,-109,-108 d-174,-135,-104,-100 d-120,-107,-60,-51 u-114,-68,-65,-40 d-66,-65,5,5 u-66,-52,5,6 d-72,-51,-40,-19 u-102,-97,-40,-39 u-135,-103,-97,-90
u-152,-151,-102,-54 d-165,-151,-72,-60 u-280,-259,-72,-70 d-282,-259,-175,-135 u-264,-183,-176,-174 u-198,-192,-180,-127 d-232,-192,-147,-147 d-150,-148,-103,-75 u-142,-123,-104,-100 d-124,-123,-66,-40
d-78,-69,-52,-46 u-105,-100,-49,-44 d-102,-99,-60,-48 d-72,-63,-22,-15 u-60,-33,-22,-22 d-34,-33,8,8 u-42,-30,8,9 d-42,-30,-10,-8 d-12,-12,38,41 u-7,8,38,38
d-12,8,17,41 d-5,15,23,32 d20,20,87,92 u54,75,87,90 u38,47,79,87`.split(/\s+/);

  document.getElementById("candles").innerHTML = candles.map((c, i) => {
    const color = c[0] === "u" ? "#f06292" : "#5b9cf6";
    const [high, top, bottom, low] = c.slice(1).split(",").map(Number);
    const x = 10 + i * 20.745;
    return `<rect x="${x - 1.5}" y="${high}" width="3" height="${low - high}" fill="${color}"/>` +
      `<rect x="${x - 7.5}" y="${top}" width="15" height="${Math.max(bottom - top, 3)}" fill="${color}"/>`;
  }).join("");

  const pink = "#3b2034", grey = "#2a303d";
  const clouds = [
    [pink, "0,648 30,648 50,662 75,680 100,670 130,668 145,672 180,650 220,635 250,640 275,635 300,610 325,608 335,580 355,562 515,562 530,567 545,525 570,480 595,470 610,400 650,370 700,355 725,335 800,330 950,325 975,315 1000,313 1040,322 1060,332 1140,332 1155,350 1190,362 1200,372 1185,400 1110,435 1060,460 1040,492 610,492 590,563 570,565 550,595 535,601 355,601 335,615 320,655 265,660 250,680 230,700 210,700 180,745 165,820 150,870 135,898 115,905 90,925 55,925 20,940 0,948"],
    [pink, "1200,372 1290,355 1315,325 1340,318 1400,318 1415,350 1490,350 1490,384 1215,384"],
    [grey, "1490,345 1530,330 1551,312 1670,312 1690,330 1740,335 1745,350 1790,350 1833,430 2023,430 2000,467 1960,475 1920,500 1877,500 1858,464 1833,464 1805,400 1790,378 1740,392 1551,388 1490,384"],
    [pink, "2025,415 2050,370 2080,357 2110,357 2140,372 2330,372 2371,345 2401,312 2471,315 2520,330 2611,322 2651,308 2681,303 2701,290 2726,277 2741,276 2761,295 2796,330 2891,330 2911,335 2911,395 2891,402 2050,402"],
    [grey, "2911,335 2931,330 2911,395"],
    [pink, "2931,335 2967,320 3026,318 3059,312 3068,342 2931,340"],
    [grey, "3061,340 3076,382 3116,392 3162,406 3329,407 3283,420 3268,447 3237,422 3232,417 3099,415 3080,408"],
    [pink, "3346,403 3403,380 3461,378 3478,360 3513,242 3541,235 3593,188 3610,160 3633,115 3690,60 3748,38 3805,25 3851,15 3909,0 3989,-25 4035,-60 4075,-70 4098,-112 4127,-120 4155,-140 4207,-145 4287,-138 4333,-130 4368,-100 4425,-75 4471,-70 4500,-50 4529,-35 4551,-32 4546,-20 4506,0 4448,10 4414,25 4368,65 4345,78 4282,80 4259,100 4224,102 4178,122 4155,178 4092,182 4075,223 3622,223 3599,270 3559,315 3518,320 3484,403"]
  ];
  document.getElementById("clouds").innerHTML = clouds.map(([fill, pts]) => `<polygon points="${pts}" fill="${fill}"/>`).join("");

  const averages = [
    ["#4caf50", 6, "0,600 30,540 50,510 74,492 95,412 130,402 175,401 198,384 380,384 402,370 425,368 450,345 470,325 500,320 550,312 570,287 610,286 635,293 652,303 675,305 692,322 735,324 760,333 800,330 880,327 900,348 1040,349 1060,352 1275,352 1295,385 1315,428 1335,430 1355,490 1362,500 1400,500 1440,477 1485,470 1505,440 1525,410 1551,402 1840,403 1858,393 1876,342 2065,342 2110,356 2150,355 2168,351 2208,288 2236,288 2266,330 2531,330 2551,350 2566,400 2581,406 2721,408 2746,425 2958,427 2996,320 3019,318 3042,310 3059,290 3082,273 3099,230 3122,168 3145,165 3162,148 3206,147 3226,124 3289,123 3312,107 3352,67 3415,50 3461,50 3484,32 3507,-5 3536,-45 3559,-46 3570,-85 3593,-87 3622,-124 3788,-124 3805,-142 3886,-137 3909,-122 3972,-120 3995,-95 4035,-95"],
    ["#ff0000", 6, "0,525 30,480 70,450 100,395 135,342 170,340 190,300 225,296 300,300 320,285 350,280 380,290 410,295 450,305 490,330 540,357 600,368 700,372 740,378 760,360 790,347 815,352 850,365 880,385 920,402 960,408 990,412 1020,425 1060,432 1100,432 1140,447 1160,432 1190,415 1240,405 1265,418 1290,455 1320,487 1350,488 1400,470 1440,420 1490,370 1545,303 1560,315 1581,335 1601,365 1621,385 1661,391 1691,378 1731,368 1771,338 1811,311 1851,315 1886,335 1926,330 1966,305 2021,292 2061,290 2101,275 2141,260 2186,243 2226,262 2271,305 2321,318 2351,312 2391,293 2441,297 2481,293 2521,278 2546,300 2566,345 2601,378 2631,400 2701,402 2726,390 2751,394 2771,402 2791,390 2831,360 2891,325 2951,292 2976,270 3011,210 3041,155 3061,145 3082,100 3103,50 3122,40 3162,-5 3243,-12 3272,-25 3300,-50 3346,-75 3415,-72 3461,-58 3495,-62 3541,-82 3576,-92 3587,-125 3645,-150 3691,-142 3725,-118 3794,-100 3851,-62 3909,-30 3955,-12 4001,15 4035,23"],
    ["#ffeb3b", 6, "0,530 10,550 30,490 50,440 74,438 90,365 108,330 122,320 170,319 195,313 214,290 240,280 257,241 280,247 298,259 325,262 345,270 385,271 405,287 448,289 470,298 490,312 508,318 530,340 550,360 570,373 620,373 635,385 650,407 730,410 745,390 757,370 775,350 800,342 812,325 825,311 865,311 880,315 898,348"],
    ["#ffeb3b", 6, "983,351 1000,410 1020,430 1050,440 1130,443 1146,452 1165,436 1205,434 1240,422 1275,425 1295,465 1315,498 1360,500"],
    ["#ffeb3b", 6, "1480,471 1505,430 1530,340 1541,300 1581,303 1606,330 1626,342 1721,342 1734,360 1753,404 1771,382 1796,376 1821,340 1851,290 1876,278 1896,286 1981,287 2001,321 2021,303 2081,300 2101,275 2121,257 2201,256 2231,280 2266,328 2371,332 2396,355 2436,355 2461,315 2481,300 2521,282 2536,292 2551,360 2566,423 2581,428 2706,428 2726,467 2749,467 2766,418 2786,410 2821,378 2851,370 2891,335 2936,333 2958,318 2981,225 3001,162 3031,152 3050,125 3082,100 3103,50 3122,43 3145,15 3185,-42 3243,-45 3268,-80 3312,-60 3369,-68 3432,-67 3449,-84 3553,-83 3570,-95 3587,-140 3622,-141 3668,-168 3702,-168 3725,-161 3765,-160 3788,-145 3805,-123 3828,-122 3851,-72 3886,-62 3909,-32 3955,-32 3977,-10 4012,23 4035,24"],
    ["#ffffff", 12, "0,1332 60,1300 220,1225 340,1170 480,1113 620,1062 740,1025 800,1005 980,957 1120,925 1270,892 1380,875 1440,860 1541,828 1600,818 1671,805 1821,770 1921,748 2071,712 2201,683 2281,673 2401,652 2531,630 2621,625 2771,608 2901,590 2967,578 3071,552 3162,523 3266,495 3369,465 3484,435 3622,395 3759,366 3897,342 4035,324"]
  ];
  document.getElementById("averages").innerHTML = averages.map(([color, w, pts]) =>
    `<polyline points="${pts}" stroke="${color}" stroke-width="${w}" stroke-linejoin="round" stroke-linecap="round"/>`).join("");

  // stochastic: 3 oscillators, each with a signal line
  const fast = "0,343 28,338 52,348 138,350 175,372 224,380 254,388 297,392 346,358 383,385 420,430 493,427 542,418 591,378 622,340 652,330 671,345 695,355 716,382 744,360 775,332 793,333 818,362 860,425 897,433 922,410 964,362 1001,357 1050,418 1105,365 1130,372 1154,362 1191,333 1234,337 1277,410 1313,432 1350,400 1393,330 1442,322 1509,335 1552,345 1607,423 1650,420 1705,358 1754,340 1797,333 1834,370 1877,425 1901,430 1926,395 1956,330 1981,323 2021,345 2061,392 2091,395 2141,377 2186,338 2251,415 2291,408 2321,378 2361,332 2401,335 2456,405 2481,385 2519,333 2581,418 2641,375 2711,345 2741,355 2786,388 2831,345 2891,335 2941,350 3001,332 3021,336 3038,328 3061,345 3101,353 3126,343 3161,356 3191,388 3226,428 3251,430 3281,380 3306,345 3331,333 3366,340 3396,380 3431,430 3471,418 3496,375 3536,325 3556,348 3581,342 3601,363 3621,358 3666,380 3706,415 3746,422 3771,410 3806,407 3846,430 3871,420 3971,400 4011,425 4035,417";
  const mid = "0,245 52,225 107,211 187,222 260,242 309,262 383,258 481,288 567,292 628,270 701,240 787,210 836,235 897,300 946,292 1020,278 1093,265 1154,240 1234,210 1289,255 1338,288 1387,260 1448,212 1497,198 1546,205 1583,235 1644,290 1705,268 1791,228 1840,215 1877,225 1911,268 1951,268 2021,233 2131,233 2181,222 2231,235 2291,274 2341,262 2381,233 2431,222 2521,218 2571,243 2621,274 2681,250 2781,228 2881,205 3041,200 3171,210 3211,230 3271,260 3321,245 3361,220 3381,217 3421,230 3471,267 3521,258 3581,224 3661,228 3721,270 3751,285 3821,295 3881,299 3941,293 4035,293";
  const slow = "0,108 40,100 113,90 236,86 358,97 407,108 456,120 505,138 554,150 603,157 664,159 726,152 787,126 848,130 946,134 1007,158 1154,156 1203,152 1240,140 1313,147 1399,130 1473,108 1522,78 1595,75 1644,97 1754,117 1803,106 1881,104 2031,103 2121,93 2201,91 2281,110 2401,120 2461,112 2531,97 2571,112 2661,120 2751,125 2801,112 2881,95 2961,80 3031,72 3141,70 3221,82 3281,87 3401,89 3481,98 3561,107 3641,97 3701,99 3751,116 3841,148 3901,164 4001,175 4035,175";
  const slowSignal = "0,92 113,92 358,94 481,110 603,137 726,153 848,138 958,134 1093,148 1216,152 1338,146 1497,128 1583,90 1681,84 1803,100 1911,108 2081,104 2181,96 2281,99 2381,108 2441,118 2531,110 2631,110 2731,120 2831,120 2961,98 3031,80 3181,68 3281,78 3381,86 3421,85 3571,98 3721,100 3821,112 3921,140 4001,158 4035,162";
  const lag = (pts, d) => pts.split(" ").map(p => p.split(",").map(Number)).map(([x, y]) => [x + d, y])
    .filter(([x]) => x <= 4035).join(" ");
  const line = (pts, color, w) => `<polyline points="${pts}" stroke="${color}" stroke-width="${w}"/>`;
  const zone = (pts, color) => `<polygon points="${pts}" fill="${color}"/>`;
  document.getElementById("stoch").innerHTML =
    zone("1448,212 1480,196 1535,194 1552,212", "#9c3f4c") + zone("2870,210 2890,200 3030,198 3050,208", "#6e3542") +
    zone("500,292 540,302 567,296 560,288", "#245a8c") + zone("885,292 900,302 946,294 946,290", "#245a8c") +
    zone("3780,292 3840,302 3920,300 4035,296 4035,288 3800,288", "#24496f") +
    zone("1385,342 1400,325 1442,320 1509,335 1552,342", "#c2434e") + zone("1950,342 1970,323 1990,323 2010,342", "#c2434e") +
    zone("848,420 870,432 905,434 918,420", "#2d5f96") + zone("1295,420 1313,432 1330,420", "#2d5f96") +
    zone("1870,420 1895,432 1910,420", "#2d5f96") + zone("3215,420 3226,430 3255,430 3265,420", "#2d5f96") +
    zone("3880,158 3960,160 4035,156 4035,175 3980,172 3901,164", "#1f7fb0") +
    zone("3000,78 3031,72 3141,70 3200,78", "#8a3f48") +
    line(lag(mid, 48), "#363a45", 3) + line(mid, "#3d414c", 4.5) +
    line(slowSignal, "#1a8b9c", 4) + line(slow, "#26b6cc", 6) +
    line(lag(fast, 24), "#c9464f", 4) + line(fast, "#f7525f", 6);

  // watchlist
  const G = "text-[#22ab94]", R = "text-[#d23a4a]", W = "text-[#dbdbdb]";
  const bars = '<circle cx="12" cy="12" r="12" fill="#c79a13"/><path d="M9.500 7h5l1.500 4H8zM5.500 12.500h5l1.500 4H4zM13.500 12.500h5l1.500 4h-8z" fill="#fff"/>';
  const rows = [
    ['<circle cx="12" cy="12" r="12" fill="#0a8fb8"/><text x="12" y="15.500" font-size="9.500" font-weight="700" fill="#fff" text-anchor="middle">100</text>', "", true, true, "20,100", W, "324.5", G, "1.63", G],
    ['<use href="#i-btc"/>', "BTC", false, false, "96,148", G, "−767", R, "−0.79", R],
    [bars, "GOLD", false, true, "3,240", W, "1.77", G, "0.05", G],
    ['<circle cx="12" cy="12" r="12" fill="#1c1c1c"/><path d="M12 4.500c2 3.500 4.500 6 4.500 9a4.500 4.500 0 0 1-9 0c0-3 2.500-5.500 4.500-9z" fill="#fff"/>', "", true, true, "58.28", W, "−0.96", R, "−1.63", R],
    ['<circle cx="12" cy="12" r="12" fill="#d3232f"/><path d="M8.500 6h3v4h1V6h3l2 12h-4v-4h-3v4h-4z" fill="#fff"/>', "", true, true, "15,740", W, "−300", R, "−1.91", R],
    ['<circle cx="12" cy="12" r="12" fill="#333"/><text x="12" y="16" font-size="11" fill="#777" text-anchor="middle">A</text>', "AAPL", false, true, "1,990", W, "39.12", G, "2.00", G]
  ];
  document.getElementById("watchlist").innerHTML = rows.map(([icon, name, delayed, dot, ...v], i) => `
    <tr class="h-[30px] border-b border-[#2e2e2e] ${i === 1 ? "rounded outline-2 -outline-offset-2 outline-[#8c8c8c]" : ""}">
      <td><div class="flex items-center">
        <svg class="h-3.5 w-3 shrink-0"><use href="#i-flag"/></svg>
        <svg class="ml-1 size-[18px] shrink-0" viewBox="0 0 24 24">${icon}</svg>
        ${delayed
          ? '<span class="mb-2.5 ml-2.5 w-2.5 overflow-hidden text-[10px] leading-4 text-[#f7931a]">지</span>'
          : `<span class="ml-1.5 overflow-hidden font-medium ${dot ? "w-3.5" : "w-6"}">${name}</span>`}
        ${dot ? '<span class="ml-1 size-1.5 shrink-0 rounded-full bg-[#8c8c8c]"></span>' : ""}
      </div></td>
      ${[0, 2, 4].map((n, k) => `<td class="${k ? "" : "pl-1"}"><div class="w-6 overflow-hidden whitespace-nowrap font-medium ${v[n + 1]}">${v[n]}</div></td>`).join("")}
      <td></td>
    </tr>`).join("");
</script>
</body>
</html>
